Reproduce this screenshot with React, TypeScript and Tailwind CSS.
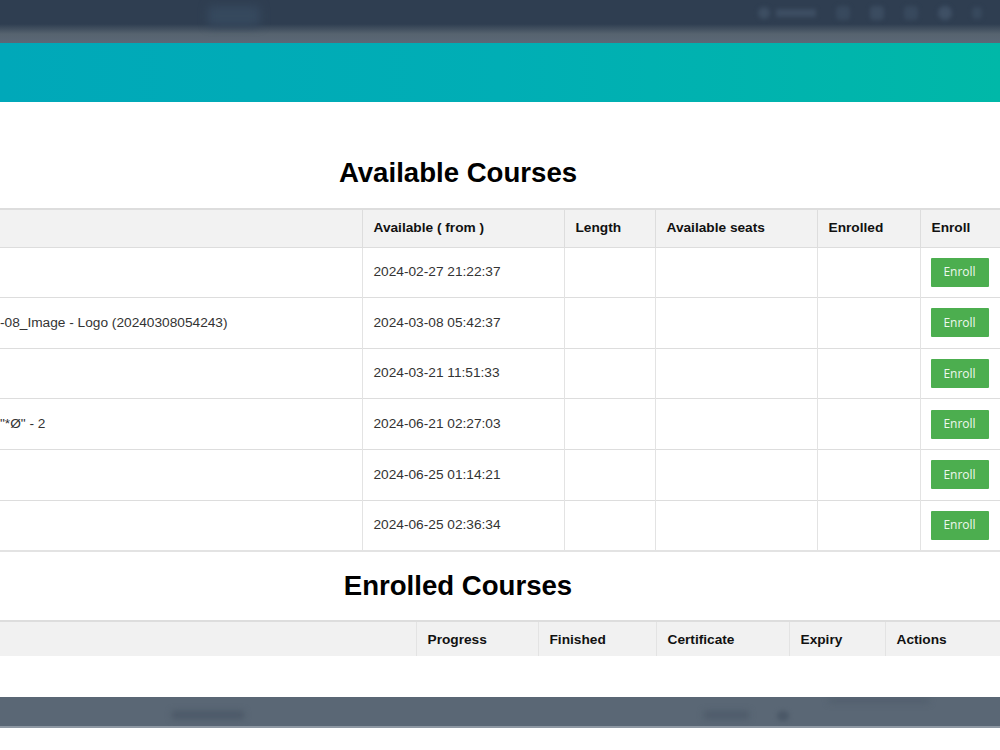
import React from "react";

const rows1 = [
  { name: "", date: "2024-02-27 21:22:37" },
  { name: "-08_Image - Logo (20240308054243)", date: "2024-03-08 05:42:37" },
  { name: "", date: "2024-03-21 11:51:33" },
  { name: "\"*Ø\" - 2", date: "2024-06-21 02:27:03" },
  { name: "", date: "2024-06-25 01:14:21" },
  { name: "", date: "2024-06-25 02:36:34" },
];

export default function App() {
  return (
    <div className="w-[1000px] h-[750px] overflow-hidden bg-white" style={{ fontFamily: '"Liberation Sans", Arial, sans-serif' }}>
      {/* blurred top nav */}
      <div className="h-[43px] bg-[linear-gradient(to_bottom,#2f3e51_0px,#2f3e51_24px,#56636f_34px,#5b6877_43px)] flex items-start">
        <div className="ml-[208px] mt-[6px] w-[52px] h-[20px] rounded bg-[#36495e] blur-[5px]" />
        <div className="ml-auto flex items-center gap-[20px] mt-[6px] mr-[18px]">
          <div className="flex items-center gap-[6px] blur-[2px]">
            <div className="w-[12px] h-[12px] rounded-full bg-[#3d4e62]" />
            <div className="w-[40px] h-[8px] bg-[#3d4e62]" />
          </div>
          <div className="w-[14px] h-[14px] rounded bg-[#38495d] blur-[2px]" />
          <div className="w-[14px] h-[14px] rounded bg-[#3b4c60] blur-[2px]" />
          <div className="w-[14px] h-[14px] rounded bg-[#38495d] blur-[2px]" />
          <div className="w-[14px] h-[14px] rounded-full bg-[#3f5065] blur-[2px]" />
          <div className="w-[10px] h-[12px] rounded bg-[#38495d] blur-[2px]" />
        </div>
      </div>
      {/* teal banner */}
      <div className="h-[59px] bg-[linear-gradient(to_right,#00a8b9,#00aeb5_50%,#00b8a8)]" />

      {/* Available courses */}
      <h2 className="pt-[55px] text-center text-[27.6px] leading-[32px] font-bold text-black mr-[84px]">
        Available Courses
      </h2>
      <div className="mt-[19px] overflow-hidden">
        <table className="w-[1050px] border-collapse text-[13.7px] text-[#333] table-fixed">
          <colgroup>
            <col className="w-[362px]" />
            <col className="w-[202px]" />
            <col className="w-[91px]" />
            <col className="w-[162px]" />
            <col className="w-[103px]" />
            <col className="w-[130px]" />
          </colgroup>
          <thead>
            <tr className="h-[38px] bg-[#f2f2f2] border-t-2 border-b border-[#dddddd] text-left font-bold text-[#111]">
              <th className="px-[11px]"></th>
              <th className="px-[11px] border-l border-[#dddddd]">Available ( from )</th>
              <th className="px-[11px] border-l border-[#dddddd]">Length</th>
              <th className="px-[11px] border-l border-[#dddddd]">Available seats</th>
              <th className="px-[11px] border-l border-[#dddddd]">Enrolled</th>
              <th className="px-[11px] border-l border-[#dddddd]">Enroll</th>
            </tr>
          </thead>
          <tbody>
            {rows1.map((r, i) => (
              <tr key={i} className="h-[50.67px] border-t border-[#dddddd]">
                <td className="px-0 whitespace-nowrap overflow-hidden">{r.name}</td>
                <td className="px-[11px] border-l border-[#e3e3e3]">{r.date}</td>
                <td className="border-l border-[#e3e3e3]"></td>
                <td className="border-l border-[#e3e3e3]"></td>
                <td className="border-l border-[#e3e3e3]"></td>
                <td className="px-[10px] border-l border-[#e3e3e3]">
                  <button className="w-[58px] h-[29px] bg-[#4cae4f] text-[#eef8ee] text-[12px] rounded-[1px]" style={{ fontFamily: '"Open Sans", sans-serif' }}>
                    Enroll
                  </button>
                </td>
              </tr>
            ))}
            <tr className="border-t-2 border-[#e3e3e3] h-0">
              <td colSpan={6} className="p-0"></td>
            </tr>
          </tbody>
        </table>
      </div>

      {/* Enrolled courses */}
      <h2 className="pt-[18px] text-center text-[27.6px] leading-[32px] font-bold text-black mr-[84px]">Enrolled Courses</h2>
      <div className="mt-[18px] overflow-hidden">
        <table className="w-[1050px] border-collapse text-[13.7px] table-fixed">
          <colgroup>
            <col className="w-[416px]" />
            <col className="w-[122px]" />
            <col className="w-[118px]" />
            <col className="w-[133px]" />
            <col className="w-[96px]" />
            <col className="w-[165px]" />
          </colgroup>
          <thead>
            <tr className="h-[35px] bg-[#f1f1f1] border-t-2 border-[#dddddd] text-left font-bold text-[#111]">
              <th className="px-[11px] pt-[3px]"></th>
              <th className="px-[11px] pt-[3px] border-l border-[#e3e3e3]">Progress</th>
              <th className="px-[11px] pt-[3px] border-l border-[#e3e3e3]">Finished</th>
              <th className="px-[11px] pt-[3px] border-l border-[#e3e3e3]">Certificate</th>
              <th className="px-[11px] pt-[3px] border-l border-[#e3e3e3]">Expiry</th>
              <th className="px-[11px] pt-[3px] border-l border-[#e3e3e3]">Actions</th>
            </tr>
          </thead>
        </table>
      </div>
      <div className="h-[41px]" />

      {/* blurred footer */}
      <div className="h-[31px] bg-[#5a6775] border-b-2 border-[#8e98a3] flex items-start overflow-hidden">
        <div className="ml-[172px] mt-[14px] w-[72px] h-[8px] bg-[#4b5867] blur-[3px]" />
        <div className="ml-[460px] mt-[14px] w-[45px] h-[8px] bg-[#4e5b6a] blur-[3px]" />
        <div className="ml-[28px] mt-[14px] w-[12px] h-[10px] rounded-full bg-[#4b5867] blur-[2px]" />
        <div className="ml-[40px] mt-[1px] w-[100px] h-[5px] bg-[#515e6d] blur-[3px]" />
      </div>
    </div>
  );
}
